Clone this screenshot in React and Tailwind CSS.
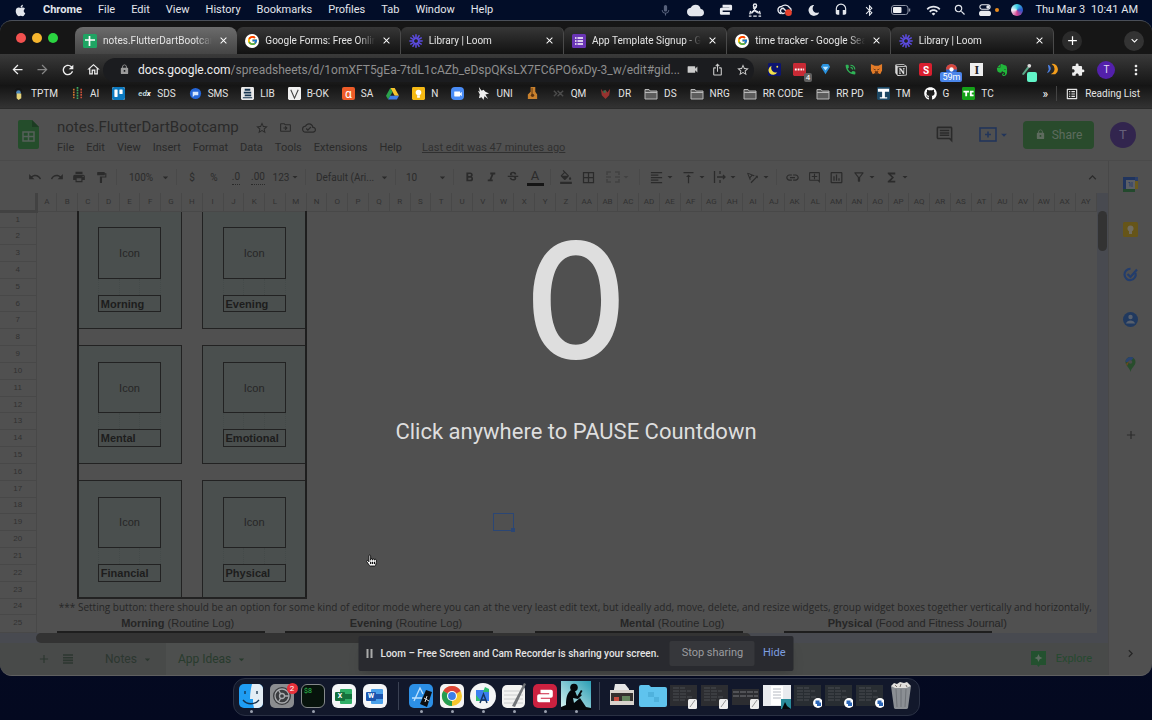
import React from "react";
import {
  MdUndo, MdRedo, MdPrint, MdFormatPaint, MdFormatBold, MdFormatItalic, MdStrikethroughS,
  MdFormatColorFill, MdBorderAll, MdFormatAlignLeft, MdVerticalAlignTop, MdLink, MdOutlineAddComment,
  MdOutlineFilterAlt, MdFunctions, MdKeyboardArrowUp, MdStarBorder, MdOutlineDriveFileMove,
  MdOutlineCloudDone, MdOutlineInsertComment, MdLock, MdArrowDropDown, MdAdd, MdChevronRight,
  MdExtension, MdVideocam, MdIosShare, MdRefresh, MdOutlineHome, MdArrowBack, MdArrowForward, MdClose,
  MdKeyboardArrowDown, MdMoreVert, MdBluetooth, MdWifi, MdSearch, MdHeadset, MdMic, MdCloud,
  MdOutlineListAlt, MdPhoneInTalk, MdInsertChartOutlined, MdTextRotationAngleup,
} from "react-icons/md";
import { FaApple, FaGithub, FaMoon, FaHandPointer } from "react-icons/fa";
import { FcGoogle } from "react-icons/fc";
import { SiEvernote, SiNotion, SiTrello } from "react-icons/si";

/* ---------- small drawings ---------- */

function LoomMark() {
  return (
    <svg viewBox="0 0 24 24" className="size-3.5 shrink-0" aria-hidden="true">
      <g stroke="#5b4be0" strokeWidth="2.6" strokeLinecap="round">
        {[0, 30, 60, 90, 120, 150].map((a) => (
          <path key={a} d="M12 1.5v6M12 16.500v6" transform={`rotate(${a} 12 12)`} />
        ))}
      </g>
      <circle cx="12" cy="12" r="4.600" fill="none" stroke="#5b4be0" strokeWidth="2.400" />
    </svg>
  );
}

function SheetsMark() {
  return (
    <svg viewBox="0 0 14 14" className="size-3.5 shrink-0" aria-hidden="true">
      <rect width="14" height="14" rx="1.500" fill="#1fa463" />
      <path d="M6.500 2v10M2 6h10" stroke="#fff" strokeWidth="1.700" />
    </svg>
  );
}

function FormsMark() {
  return (
    <svg viewBox="0 0 14 14" className="size-3.5 shrink-0" aria-hidden="true">
      <rect width="14" height="14" rx="1.500" fill="#6a35b5" />
      <path d="M3 4h1.500M3 7h1.500M3 10h1.500M5.500 4h5.500M5.500 7h5.500M5.500 10h5.500" stroke="#fff" strokeWidth="1.500" />
    </svg>
  );
}

function GoogleMark() {
  return (
    <span className="grid size-3.5 shrink-0 place-items-center rounded-full bg-white">
      <FcGoogle size={11} />
    </span>
  );
}

function DriveMark() {
  return (
    <svg viewBox="0 0 24 22" className="size-[13px]" aria-hidden="true">
      <path d="M8 1h8l8 14h-8z" fill="#f7c52d" />
      <path d="M8 1l4 7L4 22 0 15z" fill="#2ba24c" />
      <path d="M8 15h16l-4 7H4z" fill="#3f7de8" />
    </svg>
  );
}

function Glyph({ bg, fg, children }) {
  return (
    <svg viewBox="0 0 14 14" className="size-[13px] shrink-0" aria-hidden="true">
      {bg && <rect width="14" height="14" rx="1.500" fill={bg} />}
      <g fill={fg || "#fff"}>{children}</g>
    </svg>
  );
}

const FolderMark = () => (
  <svg viewBox="0 0 14 12" className="h-3 w-3.5 shrink-0" aria-hidden="true">
    <path d="M1 1.500h4l1.200 1.500H13v8H1z" fill="#5c5c5c" stroke="#b8b8b8" strokeLinejoin="round" />
    <path d="M1 4.500h12" stroke="#b8b8b8" />
  </svg>
);

/* ---------- menu bar ---------- */

function MenuBar() {
  const menus = ["File", "Edit", "View", "History", "Bookmarks", "Profiles", "Tab", "Window", "Help"];
  return (
    <header className="flex h-5 shrink-0 items-center bg-[#020d28] px-3.5 text-[11px] text-[#e3e6ec]">
      <nav className="flex min-w-0 flex-1 items-center gap-4">
        <FaApple size={13} />
        <button className="font-bold">Chrome</button>
        {menus.map((m) => <button key={m}>{m}</button>)}
      </nav>
      <div className="flex items-center gap-[15px]">
        <MdMic size={13} className="text-[#56607a]" />
        <MdCloud size={17} />
        <svg viewBox="0 0 16 14" className="h-3 w-3.5" fill="none" stroke="#e9ebf0" strokeWidth="3.200" strokeLinejoin="round"><path d="M4 2.500h9.500v3.500H2.500v5h10" /></svg>
        <svg viewBox="0 0 16 16" className="size-3.5" fill="none" stroke="#e9ebf0" strokeWidth="1.600"><path d="M6 5l4 6M9.500 4L5 11M3 9l-1 4M13 9l1 4M1 15h3M6 15h4M12 15h3" /><circle cx="8" cy="3" r="1.800" /><path d="M4 12c1-4 7-4 8 0" /></svg>
        <svg viewBox="0 0 18 16" className="h-3.5 w-4"><g fill="none" stroke="#e9ebf0" strokeWidth="1.600"><path d="M5 12a4 4 0 010-8 6 6 0 019 1 4 4 0 012 4" /><path d="M9 11a3 3 0 11-2-5l4 4" /></g><circle cx="13" cy="11" r="3.800" fill="#e8402c" /></svg>
        <FaMoon size={11} className="-rotate-12" />
        <MdHeadset size={14} />
        <MdBluetooth size={13} />
        <svg viewBox="0 0 20 10" className="h-2.5 w-5"><rect x=".5" y=".5" width="16.500" height="9" rx="2.500" fill="none" stroke="#8d94a5" /><rect x="2" y="2" width="8.500" height="6" rx="1" fill="#eceef2" /><path d="M18.500 3.500v3" stroke="#8d94a5" strokeWidth="1.500" /></svg>
        <div className="flex items-center gap-3">
          <MdWifi size={15} />
          <MdSearch size={14} />
          <span className="flex items-center gap-1">
            <svg viewBox="0 0 14 14" className="size-3"><rect x="1" y="1" width="12" height="5" rx="2.500" fill="none" stroke="#e9ebf0" strokeWidth="1.200" /><circle cx="10.500" cy="3.500" r="2" fill="#e9ebf0" /><rect y="8" width="14" height="6" rx="3" fill="#e9ebf0" /></svg>
            <span className="size-1 rounded-full bg-[#e88a1c]" />
          </span>
          <span className="size-3 rounded-full bg-[conic-gradient(#3ad1e6,#2b56c9,#d33f8e,#f0f2f7,#3ad1e6)]" />
          <span className="flex gap-1.5 whitespace-nowrap"><span>Thu Mar 3</span><span>10:41 AM</span></span>
        </div>
      </div>
    </header>
  );
}

/* ---------- browser chrome ---------- */

const tabs = [
  { icon: <SheetsMark />, title: "notes.FlutterDartBootcamp", active: true },
  { icon: <GoogleMark />, title: "Google Forms: Free Online" },
  { icon: <LoomMark />, title: "Library | Loom" },
  { icon: <FormsMark />, title: "App Template Signup - Google" },
  { icon: <GoogleMark />, title: "time tracker - Google Search" },
  { icon: <LoomMark />, title: "Library | Loom" },
];

function TabStrip() {
  return (
    <div className="flex h-[33px] items-end bg-[#161616] pr-2">
      <div className="flex h-[33px] w-[75px] shrink-0 items-center gap-1.5 pl-4">
        <span className="size-2.5 rounded-full bg-[#f2514f]" />
        <span className="size-2.5 rounded-full bg-[#f5b52e]" />
        <span className="size-2.5 rounded-full bg-[#2bd441]" />
      </div>
      <div className="flex min-w-0 flex-1">
        {tabs.map((t, i) => (
          <div
            key={i}
            className={
              t.active
                ? "flex h-[27px] min-w-0 flex-1 items-center rounded-t-lg bg-linear-to-b from-[#6c6c6c] to-[#454545] px-2"
                : "flex h-[27px] min-w-0 flex-1 items-center rounded-t-md border-r border-[#4a4a4a] bg-linear-to-b from-[#373737] to-[#121212] px-2"
            }
          >
            {t.icon}
            <button className="ml-1.5 min-w-0 flex-1 overflow-hidden mask-r-from-85% text-left text-[10px] whitespace-nowrap text-[#e4e4e4]">{t.title}</button>
            <button aria-label="Close tab" className="ml-1.5 text-white"><MdClose size={11} /></button>
          </div>
        ))}
      </div>
      <div className="flex h-[27px] w-[90px] shrink-0 items-center justify-between pl-2 text-white">
        <button aria-label="New tab" className="grid size-5 place-items-center rounded-full bg-[#2b2b2b]"><MdAdd size={15} /></button>
        <button aria-label="Search tabs" className="grid size-5 place-items-center rounded-full bg-[#333]"><MdKeyboardArrowDown size={13} /></button>
      </div>
    </div>
  );
}

function Extensions() {
  return (
    <div className="flex flex-1 items-center justify-between pr-2 pl-3.5">
      <Glyph bg="#0c1470"><path d="M4 3a5 5 0 106 7 5 5 0 01-6-7z" fill="#f3e04a" /><circle cx="10" cy="4" r="1" fill="#f3e04a" /></Glyph>
      <span className="relative"><Glyph bg="#c92a35"><path d="M2 6h2v2H2zM5 6h2v2H5zM8 6h2v2H8zM11 6h1v2h-1z" /></Glyph><span className="absolute -right-1.5 -bottom-1.5 rounded-xs bg-[#606060] px-0.5 text-[8px] leading-[9px] text-white">4</span></span>
      <Glyph><path d="M2 4l2-3h6l2 3-5 8z" fill="#2a93e0" /><path d="M4 4h6l-3 4z" fill="#bfe6ff" /></Glyph>
      <MdPhoneInTalk size={13} className="text-[#2fb457]" />
      <Glyph><path d="M1 1l4 2h4l4-2v7l-2 4-2-1H5l-2 1-2-4z" fill="#e27b28" /><path d="M5 9h4l-1 3H6z" fill="#5a2d12" /><path d="M3 6l3 1v1zM11 6L8 7v1z" fill="#2b1a10" /></Glyph>
      <SiNotion size={12} className="text-[#dadada]" />
      <span className="grid size-[13px] place-items-center rounded-xs bg-[#d91f2f] text-[10px] font-bold text-white">S</span>
      <span className="relative"><Glyph><circle cx="7" cy="7" r="6" fill="#2c62c9" /><path d="M1 7a6 6 0 0112 0H9a2 2 0 00-4 0z" fill="#d6473b" /><circle cx="7" cy="7" r="2.300" fill="#fff" /></Glyph><span className="absolute -bottom-1.5 left-1/2 -translate-x-1/2 rounded-xs bg-[#4a86ea] px-0.5 text-[9px] leading-[10px] text-white">59m</span></span>
      <span className="grid size-[13px] place-items-center bg-[#eeeeee] font-['Liberation_Serif',serif] text-[12px] leading-3 font-bold text-[#222]">I</span>
      <SiEvernote size={12} className="text-[#20b53a]" />
      <span className="relative"><Glyph><path d="M2 12l6-8 2 1-6 8z" fill="#5aa888" /><circle cx="10" cy="3" r="2" fill="#ddd" /></Glyph><span className="absolute -right-1 -bottom-1.5 size-2.5 rounded-xs bg-[#61f5c8]" /></span>
      <Glyph><path d="M2 2a4 4 0 013 5 6 6 0 01-4 4l2-4z" fill="#4c7fe0" /><path d="M6 1a6 6 0 014 11H5a6 6 0 001-11z" fill="#f29d1c" /></Glyph>
      <button aria-label="Extensions"><MdExtension size={14} className="text-[#eeeeee]" /></button>
      <button className="grid size-[18px] place-items-center rounded-full bg-[#5320ab] text-[10px] text-[#e3d9f5]">T</button>
      <button aria-label="More"><MdMoreVert size={16} className="text-[#eeeeee]" /></button>
    </div>
  );
}

function AddressBar() {
  return (
    <div className="flex h-[31px] items-center bg-linear-to-b from-[#3a3a3a] to-[#161616] pl-2.5 text-[#eeeeee]">
      <div className="flex w-[93px] shrink-0 items-center gap-2.5">
        <button aria-label="Back"><MdArrowBack size={15} /></button>
        <button aria-label="Forward" className="text-[#858585]"><MdArrowForward size={15} /></button>
        <button aria-label="Reload"><MdRefresh size={16} /></button>
        <button aria-label="Home"><MdOutlineHome size={15} /></button>
      </div>
      <div className="flex h-6 w-[57%] items-center rounded-full bg-[#1b1c1f] pr-1 pl-4 text-[12px]">
        <MdLock size={11} className="mr-2 shrink-0 text-[#9b9b9b]" />
        <label htmlFor="address" className="text-[#eeeeee]">docs.google.com</label>
        <input id="address" readOnly className="min-w-0 flex-1 bg-transparent text-[#8e8e8e] outline-none" value="/spreadsheets/d/1omXFT5gEa-7tdL1cAZb_eDspQKsLX7FC6PO6xDy-3_w/edit#gid..." />
        <span className="flex items-center gap-3 text-[#cccccc]">
          <button aria-label="Camera"><MdVideocam size={13} /></button>
          <button aria-label="Share"><MdIosShare size={13} /></button>
          <button aria-label="Bookmark"><MdStarBorder size={14} /></button>
        </span>
      </div>
      <Extensions />
    </div>
  );
}

const bookmarks = [
  { t: "TPTM", i: <Glyph><circle cx="7" cy="5" r="4" fill="#151515" /><circle cx="7" cy="6" r="2.500" fill="#4c86b8" /><path d="M5 7h5v5l-3 2-2-2z" fill="#e4d27a" /></Glyph> },
  { t: "AI", i: <Glyph><g fill="none" strokeWidth="1.800" strokeDasharray="1.800 1"><path d="M3 2v10" stroke="#d0762f" /><path d="M7 0v14" stroke="#3fae62" /><path d="M11 2v10" stroke="#c9503a" /></g></Glyph> },
  { i: <span className="grid size-[13px] place-items-center overflow-hidden rounded-xs bg-white"><SiTrello size={13} className="text-[#0c79bf]" /></span> },
  { t: "SDS", i: <span className="w-[13px] text-[8px] leading-3 font-bold text-[#b8cfd3] italic">ed<span className="text-white">x</span></span> },
  { t: "SMS", i: <Glyph><circle cx="7" cy="7" r="6" fill="#2566d8" /><path d="M4 5h6v4H6l-2 2z" fill="#d7e7ff" /></Glyph> },
  { t: "LIB", i: <Glyph bg="#e9e9e9"><path d="M4 2h6v2H4zM3 5h8v2H3zM4 8h7v2H4zM2 11h10v1H2z" fill="#16344f" /></Glyph> },
  { t: "B-OK", i: <Glyph bg="#f1f1f1"><path d="M3 3l4 9 4-9" fill="none" stroke="#444" strokeWidth="1.200" /></Glyph> },
  { t: "SA", i: <span className="grid size-[13px] place-items-center rounded-xs bg-[#ee5c28] text-[12px] leading-3 text-white">α</span> },
  { i: <DriveMark /> },
  { t: "N", i: <Glyph bg="#f5b914"><circle cx="7" cy="6" r="3" /><path d="M5.500 9h3v2.500h-3z" /></Glyph> },
  { i: <span className="grid size-[13px] place-items-center rounded-sm bg-[#4a8cf5]"><MdVideocam size={10} className="text-white" /></span> },
  { t: "UNI", i: <Glyph fg="#eeeeee"><path d="M2 0l3 4 2-1 2 2 4 2-4 1 3 5-4-3-1 4-2-3-3 1 1-4-2-4 2 1z" /></Glyph> },
  { i: <Glyph><path d="M5 0h5v5l2 3v5H2V8l3-3z" fill="#c9812d" /><circle cx="7" cy="9" r="1.800" fill="#5b3412" /><path d="M6.500 1v7" stroke="#5b3412" /></Glyph> },
  { t: "QM", i: <Glyph><path d="M2 4l3 3-3 3M6 4l3 3-3 3M12 4L9 7l3 3" fill="none" stroke="#4b4b4b" strokeWidth="1.500" /></Glyph> },
  { t: "DR", i: <Glyph><path d="M2 2l3 4 2-3 2 3 3-4-1 7-4 4-4-4z" fill="#96332f" /><circle cx="6" cy="5" r="1.500" fill="#3d6b4c" /></Glyph> },
  { t: "DS", i: <FolderMark /> },
  { t: "NRG", i: <FolderMark /> },
  { t: "RR CODE", i: <FolderMark /> },
  { t: "RR PD", i: <FolderMark /> },
  { t: "TM", i: <Glyph bg="#1c4763"><path d="M1 2h12v3H8.500v6H11v1.500H3V11h2.500V5H1z" /></Glyph> },
  { t: "G", i: <FaGithub size={13} className="text-white" /> },
  { t: "TC", i: <Glyph bg="#14a018"><path d="M1.500 4h6v2h-2v4h-2V6h-2zM8.500 4h4v2h-2v2h2v2h-4z" /></Glyph> },
];

function BookmarksBar() {
  return (
    <div className="flex h-6 items-center border-b border-[#2b2b2b] bg-linear-to-b from-[#141414] to-[#333] pr-3 pb-1.5 pl-3 text-[10px] text-[#e4e4e4]">
      <nav className="flex min-w-0 flex-1 items-center gap-[13px]">
        {bookmarks.map((b, i) => (
          <a key={i} href="#bookmark" className="flex items-center gap-1.5 whitespace-nowrap">
            {b.i}
            {b.t}
          </a>
        ))}
      </nav>
      <button className="mr-2 text-[12px] text-white">»</button>
      <button className="flex items-center gap-1.5 border-l border-[#444] pl-2"><MdOutlineListAlt size={14} />Reading List</button>
    </div>
  );
}

/* ---------- spreadsheet application ---------- */

function DocHeader() {
  const menus = ["File", "Edit", "View", "Insert", "Format", "Data", "Tools", "Extensions", "Help"];
  return (
    <div className="flex h-[52px] shrink-0 items-center border-b border-[#4a4a4a] pr-4 pl-[18px] text-[#2a2a2a]">
      <svg viewBox="0 0 21 29" className="h-[29px] w-[21px] shrink-0" aria-hidden="true">
        <path d="M2 0h12l7 7v20a2 2 0 01-2 2H2a2 2 0 01-2-2V2a2 2 0 012-2z" fill="#244d2b" />
        <path d="M14 0l7 7h-7z" fill="#1c3c22" />
        <path d="M5 12h11v9H5zM5 16.500h11M10.500 12v9" fill="none" stroke="#55605a" strokeWidth="1.500" />
      </svg>
      <div className="ml-[18px] flex min-w-0 flex-1 flex-col pt-1">
        <div className="flex h-6 items-center gap-2.5 text-[15px]">
          <h1 className="mr-1.5 whitespace-nowrap">notes.FlutterDartBootcamp</h1>
          <button aria-label="Star"><MdStarBorder size={14} /></button>
          <button aria-label="Move"><MdOutlineDriveFileMove size={13} /></button>
          <button aria-label="Saved"><MdOutlineCloudDone size={14} /></button>
        </div>
        <div className="flex h-[18px] items-center gap-3 text-[11px] whitespace-nowrap">
          {menus.map((m) => <button key={m}>{m}</button>)}
          <a href="#history" className="ml-2 text-[#303030] underline">Last edit was 47 minutes ago</a>
        </div>
      </div>
      <button aria-label="Comments"><MdOutlineInsertComment size={19} /></button>
      <button aria-label="Present" className="ml-[17px] flex h-7 items-center rounded px-2 text-[#22355a]">
        <svg viewBox="0 0 18 15" className="h-[15px] w-[18px]" fill="none" stroke="#22355a" strokeWidth="1.600"><rect x="1" y="1" width="16" height="13" /><path d="M9 4.500v6M6 7.500h6" /></svg>
        <MdArrowDropDown size={14} />
      </button>
      <button className="ml-1 flex h-7 w-[71px] items-center justify-center gap-1.5 rounded bg-[#294b2c] text-[12px] text-[#5d6b5e]"><MdLock size={11} />Share</button>
      <button className="ml-4 grid size-[26px] place-items-center rounded-full bg-[#32254e] text-[13px] text-[#66607a]">T</button>
    </div>
  );
}

function Tool({ label, wide, children }) {
  return (
    <button aria-label={label} className={wide ? "flex w-8 shrink-0 items-center justify-center" : "flex w-[22px] shrink-0 items-center justify-center"}>
      {children}
      {wide && <MdArrowDropDown size={12} className="-mr-1" />}
    </button>
  );
}

function Pick({ label, value, size }) {
  return (
    <label className="flex shrink-0 items-center">
      <select aria-label={label} className={size + " appearance-none bg-transparent text-[10px] outline-none"}>
        <option>{value}</option>
      </select>
      <MdArrowDropDown size={13} />
    </label>
  );
}

const Divide = () => <span className="mx-1 h-4 w-px shrink-0 bg-[#494949]" />;

function FormatBar() {
  return (
    <div className="flex h-8 shrink-0 items-center pr-2 pl-6 text-[10px] text-[#2b2b2b]">
      <Tool label="Undo"><MdUndo size={14} /></Tool>
      <Tool label="Redo"><MdRedo size={14} /></Tool>
      <Tool label="Print"><MdPrint size={14} /></Tool>
      <Tool label="Paint format"><MdFormatPaint size={13} /></Tool>
      <Divide />
      <span className="pl-2"><Pick label="Zoom" value="100%" size="w-[30px]" /></span>
      <Divide />
      <Tool label="Currency">$</Tool>
      <Tool label="Percent">%</Tool>
      <Tool label="Fewer decimals"><span className="border-b border-dotted">.0</span></Tool>
      <Tool label="More decimals"><span className="border-b border-dotted">.00</span></Tool>
      <Tool label="Formats" wide>123</Tool>
      <Divide />
      <span className="pl-1.5"><Pick label="Font" value="Default (Ari..." size="w-[62px]" /></span>
      <Divide />
      <span className="pl-1.5"><Pick label="Font size" value="10" size="w-[30px]" /></span>
      <Divide />
      <Tool label="Bold"><MdFormatBold size={15} /></Tool>
      <Tool label="Italic"><MdFormatItalic size={15} /></Tool>
      <Tool label="Strikethrough"><MdStrikethroughS size={14} /></Tool>
      <Tool label="Text colour"><span className="w-[17px] border-b-3 border-[#151515] text-center text-[13px] leading-[14px]">A</span></Tool>
      <Divide />
      <Tool label="Fill colour"><MdFormatColorFill size={14} /></Tool>
      <Tool label="Borders"><MdBorderAll size={15} /></Tool>
      <span className="px-0.5 text-[#414141]"><Tool label="Merge" wide><svg viewBox="0 0 14 12" className="h-3 w-3.5" fill="none" stroke="currentColor" strokeWidth="1.500"><path d="M5 1H1v3M9 1h4v3M5 11H1V8M9 11h4V8M0 6h5M9 6h5" /></svg></Tool></span>
      <Divide />
      <Tool label="Align" wide><MdFormatAlignLeft size={15} /></Tool>
      <Tool label="Vertical align" wide><MdVerticalAlignTop size={15} /></Tool>
      <Tool label="Wrap" wide><svg viewBox="0 0 14 14" className="size-3.5" fill="none" stroke="currentColor" strokeWidth="1.300"><path d="M1.500 1v12M7 1v3M7 10v3M4 7h8M10 5l2 2-2 2" /></svg></Tool>
      <Tool label="Rotate" wide><MdTextRotationAngleup size={15} /></Tool>
      <Divide />
      <Tool label="Link"><MdLink size={15} /></Tool>
      <Tool label="Comment"><MdOutlineAddComment size={13} /></Tool>
      <Tool label="Chart"><MdInsertChartOutlined size={15} /></Tool>
      <Tool label="Filter" wide><MdOutlineFilterAlt size={14} /></Tool>
      <Tool label="Functions" wide><MdFunctions size={15} /></Tool>
      <button aria-label="Collapse" className="ml-auto"><MdKeyboardArrowUp size={15} /></button>
    </div>
  );
}

const letters = "ABCDEFGHIJKLMNOPQRSTUVWXYZ".split("");
const columns = letters.concat(letters.slice(0, 25).map((l) => "A" + l));
const rows = Array.from({ length: 25 }, (_, i) => i + 1);
const cards = [
  { r: 1, c: 2, name: "Morning" }, { r: 1, c: 8, name: "Evening" },
  { r: 9, c: 2, name: "Mental" }, { r: 9, c: 8, name: "Emotional" },
  { r: 17, c: 2, name: "Financial" }, { r: 17, c: 8, name: "Physical" },
];
const logs = [
  { c: 4, from: 1, bold: "Morning", rest: " (Routine Log)" },
  { c: 15, from: 12, bold: "Evening", rest: " (Routine Log)" },
  { c: 28, from: 24, bold: "Mental", rest: " (Routine Log)" },
  { c: 38, from: 36, bold: "Physical", rest: " (Food and Fitness Journal)" },
];

function Cell({ r, c }) {
  const card = cards.find((k) => r >= k.r && r <= k.r + 6 && c >= k.c && c <= k.c + 4);
  if (card) {
    const dr = r - card.r;
    const dc = c - card.c;
    if (dc >= 1 && dc <= 3 && dr >= 1 && dr <= 3) {
      if (dc > 1 || dr > 1) return null;
      return <td colSpan={3} rowSpan={3} className="border border-[#222] bg-[#4a4f4e] text-center">Icon</td>;
    }
    if (dc >= 1 && dc <= 3 && dr === 5) {
      if (dc > 1) return null;
      return <td colSpan={3} className="border border-[#222] bg-[#4a4f4e] pl-0.5 font-bold text-[#1d1d1d]">{card.name}</td>;
    }
    const edges = [];
    if (dr === 0) edges.push("border-t border-t-[#222]");
    if (dr === 6) edges.push(r === 23 ? "border-b-2 border-b-[#222]" : "border-b border-b-[#222]");
    if (dc === 0) edges.push(c === 2 ? "border-l-2 border-l-[#1e1e1e]" : "border-l border-l-[#222]");
    if (dc === 4) edges.push(c === 12 ? "border-r-2 border-r-[#1e1e1e]" : "border-r border-r-[#222]");
    return <td className={edges.length ? "bg-[#4a4f4e] " + edges.join(" ") : "border border-dotted border-[#444a49] bg-[#4a4f4e]"} />;
  }
  if (r < 24 && c === 2) return <td className="border-l-2 border-[#1e1e1e]" />;
  if (r < 24 && c === 12) return <td className="border-r-2 border-[#1e1e1e]" />;
  if (c === 7 && r === 1) return <td className="border-t border-[#222]" />;
  if (c === 7 && r === 23) return <td className="border-b-2 border-[#222]" />;
  if (r === 19 && c === 22) {
    return (
      <td className="relative border border-[#2b4674]">
        <span className="absolute -right-0.5 -bottom-0.5 size-1 bg-[#2b4674]" />
      </td>
    );
  }
  if (r === 24 && c === 1) {
    return (
      <td colSpan={50} className="overflow-hidden pl-0.5 font-['Open_Sans',sans-serif] text-[10px]">
        *** Setting button: there should be an option for some kind of editor mode where you can at the very least edit text, but ideally add, move, delete, and resize widgets, group widget boxes together vertically and horizontally,
      </td>
    );
  }
  if (r === 24 && c > 1) return null;
  if (r === 25) {
    const label = logs.find((l) => l.c === c);
    const boxed = logs.some((l) => c >= l.from && c < l.from + 10);
    return (
      <td className={boxed ? "border-b-2 border-[#1e1e1e] pl-0.5" : "pl-0.5"}>
        {label && <><b>{label.bold}</b>{label.rest}</>}
      </td>
    );
  }
  return <td />;
}

function Grid() {
  return (
    <div className="flex min-h-0 flex-1">
      <div className="min-w-0 flex-1 overflow-hidden">
        <table className="h-full w-full table-fixed border-collapse font-['Liberation_Sans',Arial,sans-serif] text-[11px] leading-3 whitespace-nowrap text-[#262626]">
          <thead>
            <tr className="h-[18px] font-[Roboto,sans-serif] text-[8px] text-[#313131]">
              <th scope="col" className="w-9 border-r-3 border-b-3 border-[#424242]" aria-label="Select all" />
              {columns.map((l) => <th key={l} scope="col" className="border-x border-b border-[#484848] font-normal">{l}</th>)}
            </tr>
          </thead>
          <tbody>
            {rows.map((r) => (
              <tr key={r} className="h-4">
                <th scope="row" className="border-y border-r border-[#484848] text-[8px] font-normal text-[#313131]">{r}</th>
                {columns.map((l, c) => <Cell key={l} r={r} c={c} />)}
              </tr>
            ))}
          </tbody>
        </table>
      </div>
      <div className="flex w-[11px] shrink-0 flex-col bg-[#484a50] pt-[18px]">
        <span className="mx-px h-10 rounded-full bg-[#333]" />
      </div>
    </div>
  );
}

function SheetTabs() {
  return (
    <div className="flex h-8 shrink-0 items-center bg-[#484a49] pl-[37px] text-[12px] text-[#2c3730]">
      <button aria-label="Add sheet"><MdAdd size={14} /></button>
      <button aria-label="All sheets" className="ml-3">
        <svg viewBox="0 0 10 10" className="size-2.5" stroke="currentColor" strokeWidth="1.600"><path d="M0 1h10M0 3.700h10M0 6.400h10M0 9h10" /></svg>
      </button>
      <button className="ml-5 flex h-full items-center gap-1 px-3">Notes<MdArrowDropDown size={13} /></button>
      <button className="flex h-full items-center gap-1 bg-[#4d4f4e] px-3 text-[#283b2d]">App Ideas<MdArrowDropDown size={13} /></button>
      <button className="mr-4 ml-auto flex items-center gap-2.5 text-[11px] text-[#25492f]">
        <svg viewBox="0 0 15 16" className="h-4 w-[15px]"><path d="M0 0h15v14H9l-1.500 2L6 14H0z" fill="#23512f" /><path d="M7.500 3l1.200 2.800L11.500 7 8.700 8.200 7.500 11 6.300 8.200 3.500 7l2.800-1.200z" fill="#5c6b60" /></svg>
        Explore
      </button>
    </div>
  );
}

function SidePanel() {
  return (
    <aside className="flex w-11 shrink-0 flex-col items-center border-l border-[#484848] pt-4">
      <div className="flex flex-col items-center gap-[30px]">
        <svg viewBox="0 0 15 15" className="size-[15px]"><path d="M0 0h12v3H3v9H0z" fill="#20345e" /><path d="M12 0h3v12h-3z" fill="#2a3e68" /><path d="M12 4h3v8h-3z" fill="#6b5a1c" /><path d="M0 12h12v3H0z" fill="#23492d" /><path d="M3 3h9v9H3z" fill="#5c5f66" /><path d="M5.500 5.500h1.500v4M9 5v5" fill="none" stroke="#2a3e68" /></svg>
        <svg viewBox="0 0 15 15" className="size-[15px]"><rect width="15" height="15" rx="1.500" fill="#665519" /><circle cx="7.500" cy="6.500" r="3" fill="#706c60" /><path d="M6 9h3v3H6z" fill="#706c60" /></svg>
        <svg viewBox="0 0 15 15" className="size-[15px]" fill="none" stroke="#233d6c" strokeWidth="2.200"><path d="M12.500 6A5.600 5.600 0 117.500 1.900" /><path d="M4.500 7l3 3L14 2.500" /></svg>
        <svg viewBox="0 0 15 15" className="size-[15px]"><circle cx="7.500" cy="7.500" r="7.500" fill="#20395f" /><circle cx="7.500" cy="5" r="2.200" fill="#58606d" /><path d="M3 11.500c1-4 8-4 9 0z" fill="#58606d" /></svg>
        <svg viewBox="0 0 15 15" className="size-[15px]"><path d="M7.500 0a5 5 0 015 5c0 4-4 5-5 10-1-5-5-6-5-10a5 5 0 015-5z" fill="#284d2c" /><path d="M2.500 5a5 5 0 018-4L7 5z" fill="#2a4370" /><path d="M3 7l4-4-3 6z" fill="#6d4a20" /><circle cx="7.500" cy="5" r="1.800" fill="#4c4c4c" /></svg>
      </div>
      <button aria-label="Get add-ons" className="mt-14 text-[#2c2c2c]"><MdAdd size={14} /></button>
      <button aria-label="Hide side panel" className="mt-auto mb-3.5 text-[#262626]"><MdChevronRight size={15} /></button>
    </aside>
  );
}

function Countdown() {
  return (
    <div className="absolute inset-0">
      <button className="flex h-full w-full flex-col items-center pt-[111px] text-[#dedede]">
        <span className="font-[Inter,sans-serif] text-[160px] leading-[160px] font-medium">0</span>
        <span className="mt-9 text-[22px] leading-8">Click anywhere to PAUSE Countdown</span>
      </button>
      <FaHandPointer size={11} className="absolute top-[446px] left-[366px] overflow-visible stroke-black stroke-[40px] text-white" />
    </div>
  );
}

function ShareBar() {
  return (
    <div className="absolute bottom-1 left-1/2 flex h-[35px] w-[435px] -translate-x-1/2 items-center rounded-xs bg-[#292a2f] pr-2 pl-2 text-[10px] whitespace-nowrap text-[#e3e3e3] shadow-lg">
      <span className="flex h-[9px] gap-0.5"><i className="w-0.5 bg-[#aaa]" /><i className="w-0.5 bg-[#aaa]" /></span>
      <span className="ml-2 flex-1 font-medium">Loom – Free Screen and Cam Recorder is sharing your screen.</span>
      <button className="h-[25px] w-[85px] shrink-0 rounded-xs bg-[#36373b] text-[11px] text-[#9b9c9f]">Stop sharing</button>
      <button className="ml-2 text-[11px] text-[#7d9fe0]">Hide</button>
    </div>
  );
}

/* ---------- dock ---------- */

function Thumb({ kind }) {
  const badge = kind === "code"
    ? <><circle cx="24" cy="21" r="5" fill="#fff" /><path d="M21.500 18.500h4v2h1.500v3.500h-4v-2h-1.500z" fill="#2b66b8" /></>
    : <><rect x="18" y="17" width="9" height="10" rx="1.500" fill="#eee" /><path d="M20 25l5-7" stroke="#999" /></>;
  return (
    <svg viewBox="0 0 28 28" className="size-7">
      <rect y={kind === "wide" ? 7 : 3} width="27" height={kind === "wide" ? 16 : 21} fill={kind === "code" ? "#282d32" : "#2c2d31"} />
      <path d={kind === "wide" ? "M1 10h25M1 14h25" : "M3 6h12M3 9h18M3 12h14M3 15h19M3 18h12"} stroke={kind === "wide" ? "#77787c" : "#4b4e52"} strokeDasharray="6 1" />
      {badge}
    </svg>
  );
}

function OfficeIcon({ color, dark, letter }) {
  return (
    <span className="relative grid size-6 place-items-center rounded-md bg-[#f5f6f8]">
      <svg viewBox="0 0 24 24" className="absolute size-6"><rect x="8" y="5" width="12" height="15" rx="1" fill={color} /><path d="M8 10h12v5H8z" fill={dark} /><rect x="3" y="8" width="10" height="9" rx="1" fill={dark} /></svg>
      <span className="relative mr-2 text-[7px] leading-none font-bold text-white">{letter}</span>
    </span>
  );
}

const Reader = () => (
  <svg viewBox="0 0 30 30" className="size-[30px]">
    <defs><linearGradient id="sky" x1="0" x2="1" y1="1" y2="0"><stop stopColor="#dcf6f2" /><stop offset="1" stopColor="#2b9db5" /></linearGradient></defs>
    <rect width="30" height="29" fill="url(#sky)" />
    <circle cx="13" cy="6.500" r="3.800" fill="#05080b" />
    <path d="M10 9c-4 3-5 8-5 15l-5 2v3h30v-2l-5-1-6-9-6 5-1-5 5 1 4-4-2-1-3 2-2-5z" fill="#05080b" />
    <path d="M17 14l3-5 1.500 1-3 5z" fill="#05080b" />
  </svg>
);

function Dock() {
  const apps1 = [
    { on: true, n: <svg viewBox="0 0 24 24" className="size-6"><rect width="24" height="24" rx="5" fill="#1f9df3" /><path d="M13 0h6a5 5 0 015 5v14a5 5 0 01-5 5h-4c-1-4-1-6-1-9h-3c0-6 1-11 2-15z" fill="#e3edf5" /><path d="M6 7v3M18 7v3M4 16c4 5 12 5 16 0" fill="none" stroke="#13304c" strokeWidth="1.300" /></svg> },
    { badge: true, n: <svg viewBox="0 0 24 24" className="size-6"><rect width="24" height="24" rx="5" fill="#8b8d90" /><circle cx="12" cy="12" r="9" fill="#3a3c3f" /><g fill="none" stroke="#a9abae" strokeWidth="1.300"><circle cx="12" cy="12" r="7" /><circle cx="12" cy="12" r="2.500" /><path d="M14.500 12H19M10.700 14.200L8.500 18M10.700 9.800L8.500 6" /></g></svg> },
    { on: true, n: <span className="block size-6 rounded-md border border-[#85898b] bg-[#07130c] pl-0.5 text-left text-[7px] leading-3 text-[#2fc653]">$8</span> },
    { n: <OfficeIcon color="#2fae66" dark="#15713d" letter="X" /> },
    { n: <OfficeIcon color="#4aa0ea" dark="#1d56ae" letter="W" /> },
  ];
  const apps2 = [
    { on: true, n: <svg viewBox="0 0 24 24" className="size-6"><rect width="24" height="24" rx="5" fill="#2c8fe6" /><path d="M5 17L11 4l3 6M3 14h10" fill="none" stroke="#bfe2ff" strokeWidth="1.300" /><path d="M17 6l6 2-5 15-7-3z" fill="#0c0d10" /><path d="M15 14l5 3M18 12l-2 6" stroke="#ddd" /></svg> },
    { on: true, n: <svg viewBox="0 0 24 24" className="size-6"><rect width="24" height="24" rx="5" fill="#f4f4f4" /><circle cx="12" cy="12" r="10" fill="#f6c62d" /><path d="M12 12L3.300 7A10 10 0 0120.700 7z" fill="#dd4437" /><path d="M12 12l0 10A10 10 0 013.300 7z" fill="#259c51" /><circle cx="12" cy="12" r="5" fill="#fff" /><circle cx="12" cy="12" r="3.900" fill="#3e7ee8" /></svg> },
    { on: true, n: <svg viewBox="0 0 26 26" className="size-[26px]"><circle cx="13" cy="13" r="13" fill="#f4f5f6" /><path d="M6 7h13v11H9l-3-3z" fill="#3b7ff0" /><path d="M6 12v6h5zM15 4l4 2v3h-6z" fill="#30bd70" /><path d="M10 20l3.500-9 3.500 9M11.500 17h4" fill="none" stroke="#173660" strokeWidth="1.500" /></svg> },
    { on: true, n: <svg viewBox="0 0 26 26" className="size-[26px]"><rect x="1" y="2" width="23" height="23" rx="5" fill="#f3f3f2" /><path d="M3 8h19M3 12h19M3 16h19M3 20h19" stroke="#bfc2c4" strokeWidth=".8" /><path d="M11 23L23 0l2 1-11 23z" fill="#73767a" /></svg> },
    { on: true, n: <svg viewBox="0 0 24 24" className="size-6"><rect width="24" height="24" rx="5" fill="#cb2140" /><path d="M7.500 7.500H18v4.500H6v4.500h11" fill="none" stroke="#fff" strokeWidth="3.600" strokeLinejoin="round" /></svg> },
    { on: true, n: <Reader /> },
  ];
  const windows = [
    { n: <svg viewBox="0 0 26 26" className="size-[26px]"><path d="M6 1h10l4 5v6H4z" fill="#e6e6e6" /><path d="M1 7h24v15H1z" fill="#d8d3cd" /><path d="M2 10h22v8H2z" fill="#35302f" /><path d="M5 14h5v4H5z" fill="#c64b3f" /><path d="M13 13h8v5h-8z" fill="#63835d" /></svg> },
    { n: <svg viewBox="0 0 28 24" className="h-6 w-7"><path d="M0 3a2 2 0 012-2h8l2 2h14a2 2 0 012 2v16a2 2 0 01-2 2H2a2 2 0 01-2-2z" fill="#5fc3ee" /><path d="M9 8h6v5H9zM15 13h5v5h-5z" fill="#4fb2dd" /></svg> },
    { n: <Thumb kind="note" /> },
    { n: <Thumb kind="note" /> },
    { n: <Thumb kind="wide" /> },
    { n: <svg viewBox="0 0 28 28" className="size-7"><rect y="3" width="28" height="21" fill="#e9ebef" /><rect x="8" y="4" width="12" height="19" fill="#fff" /><path d="M10 7h8M10 10h8M10 13h8M10 16h8" stroke="#b6bac2" /><rect x="18" y="17" width="10" height="10" fill="#2b8c9b" /><path d="M19 27l3-7 2 4 4 3z" fill="#06090b" /></svg> },
    { n: <Thumb kind="code" /> },
    { n: <Thumb kind="code" /> },
    { n: <Thumb kind="code" /> },
    { n: <svg viewBox="0 0 22 28" className="h-7 w-[22px]"><path d="M1 4h20l-3 22a2 2 0 01-2 1H6a2 2 0 01-2-1z" fill="#8b8f94" /><path d="M6 7l1 18M11 7v18M16 7l-1 18" stroke="#6f7378" /><path d="M1 4l3-3 3 1 3-2 4 1 3-1 4 4-5 2H5z" fill="#e2e0dd" /><path d="M5 3l2 2M11 2l-1 3M16 3l1 2" stroke="#78706a" /></svg> },
  ];
  const render = (list) => list.map((a, i) => (
    <button key={i} className="relative flex h-full w-[31px] items-center justify-center" aria-label="Dock item">
      {a.n}
      {a.badge && <span className="absolute top-1 right-0 grid size-[11px] place-items-center rounded-full bg-[#e8303a] text-[8px] leading-none text-white">2</span>}
      {a.on && <span className="absolute bottom-0 size-[3px] rounded-full bg-[#9aa0ae]" />}
    </button>
  ));
  const rule = <span className="mx-[7px] h-7 w-px bg-[#3a4153]" />;
  return (
    <footer className="mt-0.5 mb-1 flex h-[38px] shrink-0 items-center self-center rounded-xl border border-[#2a3144] bg-[#12182b] px-0.5 pb-0.5">
      {render(apps1)}{rule}{render(apps2)}{rule}{render(windows)}
    </footer>
  );
}

export default function App() {
  return (
    <div className="flex h-screen flex-col bg-linear-to-b from-[#020d28] to-[#040920] font-[Roboto,sans-serif]">
      <MenuBar />
      <div className="flex min-h-0 flex-1 flex-col overflow-hidden rounded-xl border-y border-t-[#4a4f58] border-b-[#606060] bg-[#505050]">
        <TabStrip />
        <AddressBar />
        <BookmarksBar />
        <main className="relative flex min-h-0 flex-1 flex-col">
          <DocHeader />
          <div className="flex min-h-0 flex-1">
            <div className="flex min-w-0 flex-1 flex-col">
              <FormatBar />
              <Grid />
              <div className="h-2.5 shrink-0 bg-[#484a50] pl-9"><div className="h-full w-2/3 rounded-full bg-[#333]" /></div>
              <SheetTabs />
            </div>
            <SidePanel />
          </div>
          <Countdown />
          <ShareBar />
        </main>
      </div>
      <Dock />
    </div>
  );
}
